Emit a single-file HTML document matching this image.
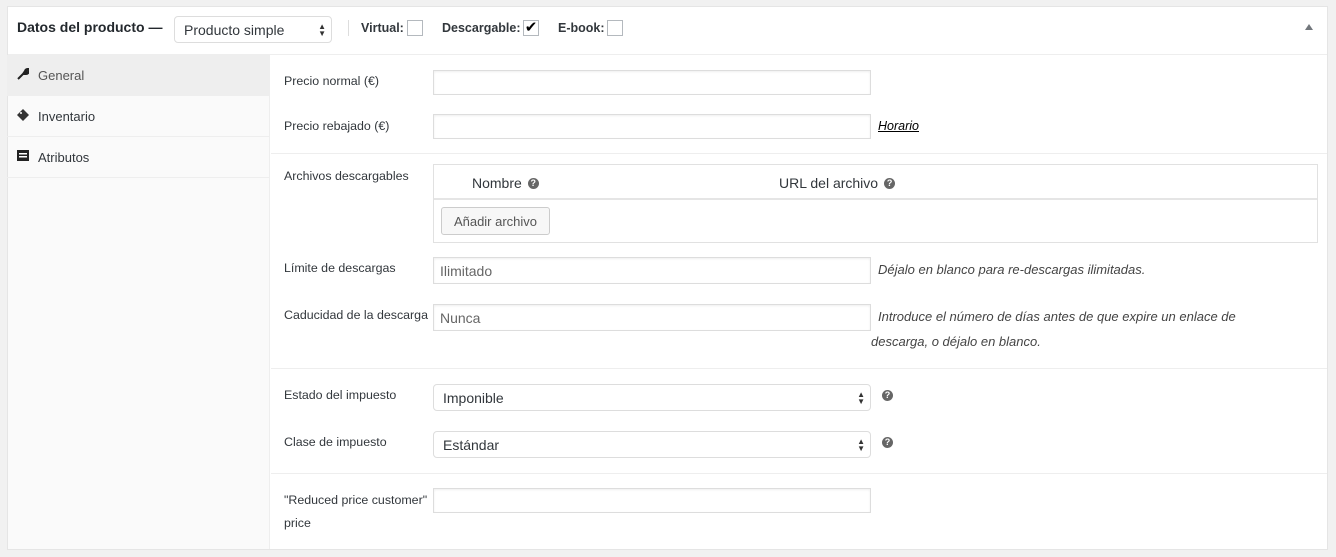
<!DOCTYPE html>
<html><head><meta charset="utf-8"><style>
*{box-sizing:border-box;margin:0;padding:0}
body{width:1336px;height:557px;background:#f1f1f1;font-family:"Liberation Sans",sans-serif;color:#32373c;position:relative;overflow:hidden}
.a{position:absolute}
.panel{left:7px;top:6px;width:1321px;height:544px;background:#fff;border:1px solid #e5e5e5}
.lbl{font-size:12.4px;color:#32373c;white-space:nowrap}
.inp{border:1px solid #ddd;background:#fff;box-shadow:inset 0 1px 2px rgba(0,0,0,.07)}
.sel{border:1px solid #ddd;border-radius:4px;background:#fff;font-size:14px;color:#32373c;padding-left:9px;display:flex;align-items:center}
.arr{position:absolute;right:5px;top:50%;transform:translateY(-50%);font-size:8px;line-height:7px;color:#333;text-align:center}
.cb{width:16px;height:16px;border:1px solid #b4b9be;background:#fff}
.help{width:11px;height:11px;border-radius:50%;background:#666;color:#fff;font-size:9px;font-weight:bold;text-align:center;line-height:11px}
.desc{font-size:13px;font-style:italic;color:#444;white-space:nowrap}
.hr{height:1px;background:#eee}
.tab{left:7px;width:263px;height:41px;border-bottom:1px solid #eee;font-size:13px;display:flex;align-items:center;padding-left:31px}
.ph{font-size:14px;color:#666;padding-left:6px;display:flex;align-items:center}
</style></head><body>
<div class="a panel"></div>
<div class="a hr" style="left:8px;top:54px;width:1319px"></div>
<div class="a" style="left:17px;top:19px;font-size:14px;font-weight:bold;color:#23282d">Datos del producto —</div>
<div class="a sel" style="left:174px;top:16px;width:158px;height:27px">Producto simple<div class="arr">▲<br>▼</div></div>
<div class="a" style="left:348px;top:20px;width:1px;height:16px;background:#ddd"></div>
<div class="a lbl" style="left:361px;top:21px;font-weight:bold;font-size:12.5px">Virtual:</div>
<div class="a cb" style="left:407px;top:20px"></div>
<div class="a lbl" style="left:442px;top:21px;font-weight:bold;font-size:12.5px">Descargable:</div>
<div class="a cb" style="left:523px;top:20px;font-size:15px;line-height:14px;text-align:center;color:#000">✔</div>
<div class="a lbl" style="left:558px;top:21px;font-weight:bold;font-size:12.5px">E-book:</div>
<div class="a cb" style="left:607px;top:20px"></div>
<div class="a" style="left:1305px;top:24px;width:0;height:0;border-left:4px solid transparent;border-right:4px solid transparent;border-bottom:6px solid #72777c"></div>

<div class="a" style="left:8px;top:55px;width:262px;height:494px;background:#fafafa;border-right:1px solid #eee"></div>
<div class="a tab" style="top:55px;background:#eee;color:#555">General</div>
<div class="a tab" style="top:96px">Inventario</div>
<div class="a tab" style="top:137px">Atributos</div>
<svg class="a" style="left:17px;top:68px" width="12" height="12" viewBox="0 0 12 12"><path d="M1 11 L6 6 M6 6 L8 3 A3 3 0 0 1 11 1 L9 3.5 L10.5 5 L12 3 A3 3 0 0 1 9 6 Z" stroke="#222" stroke-width="2" fill="#222"/></svg>
<svg class="a" style="left:17px;top:109px" width="12" height="12" viewBox="0 0 12 12"><path d="M6 0 L12 6 L6 12 L0 6 Z" fill="#333"/><circle cx="4" cy="4" r="1" fill="#fff"/></svg>
<svg class="a" style="left:17px;top:150px" width="12" height="11" viewBox="0 0 12 11"><rect x="0" y="0" width="12" height="11" fill="#222"/><rect x="2" y="3" width="8" height="1.5" fill="#fff"/><rect x="2" y="6" width="8" height="1.5" fill="#fff"/></svg>

<div class="a lbl" style="left:284px;top:74px">Precio normal (€)</div>
<div class="a inp" style="left:433px;top:70px;width:438px;height:25px"></div>
<div class="a lbl" style="left:284px;top:119px">Precio rebajado (€)</div>
<div class="a inp" style="left:433px;top:114px;width:438px;height:25px"></div>
<div class="a desc" style="left:878px;top:119px;color:#000;text-decoration:underline;font-size:12.5px">Horario</div>
<div class="a hr" style="left:271px;top:153px;width:1056px"></div>

<div class="a lbl" style="left:284px;top:169px">Archivos descargables</div>
<div class="a" style="left:433px;top:164px;width:885px;height:79px;border:1px solid #e1e1e1"></div>
<div class="a" style="left:434px;top:198px;width:883px;height:2px;background:#e5e5e5"></div>
<div class="a" style="left:472px;top:175px;font-size:14px;display:flex;align-items:center;gap:6px">Nombre <span class="help">?</span></div>
<div class="a" style="left:779px;top:175px;font-size:14px;display:flex;align-items:center;gap:6px">URL del archivo <span class="help">?</span></div>
<div class="a" style="left:441px;top:207px;width:109px;height:28px;border:1px solid #ccc;border-radius:3px;background:#f7f7f7;font-size:13px;display:flex;align-items:center;justify-content:center;color:#555">Añadir archivo</div>

<div class="a lbl" style="left:284px;top:261px">Límite de descargas</div>
<div class="a inp ph" style="left:433px;top:257px;width:438px;height:27px">Ilimitado</div>
<div class="a desc" style="left:878px;top:262px">Déjalo en blanco para re-descargas ilimitadas.</div>
<div class="a lbl" style="left:284px;top:308px">Caducidad de la descarga</div>
<div class="a inp ph" style="left:433px;top:304px;width:438px;height:27px">Nunca</div>
<div class="a desc" style="left:878px;top:309px">Introduce el número de días antes de que expire un enlace de</div>
<div class="a desc" style="left:871px;top:334px">descarga, o déjalo en blanco.</div>
<div class="a hr" style="left:271px;top:368px;width:1056px"></div>

<div class="a lbl" style="left:284px;top:388px">Estado del impuesto</div>
<div class="a sel" style="left:433px;top:384px;width:438px;height:27px">Imponible<div class="arr">▲<br>▼</div></div>
<div class="a help" style="left:882px;top:390px">?</div>
<div class="a lbl" style="left:284px;top:435px">Clase de impuesto</div>
<div class="a sel" style="left:433px;top:431px;width:438px;height:27px">Estándar<div class="arr">▲<br>▼</div></div>
<div class="a help" style="left:882px;top:437px">?</div>
<div class="a hr" style="left:271px;top:473px;width:1056px"></div>

<div class="a lbl" style="left:284px;top:493px">"Reduced price customer"</div>
<div class="a lbl" style="left:284px;top:516px">price</div>
<div class="a inp" style="left:433px;top:488px;width:438px;height:25px"></div>
</body></html>
